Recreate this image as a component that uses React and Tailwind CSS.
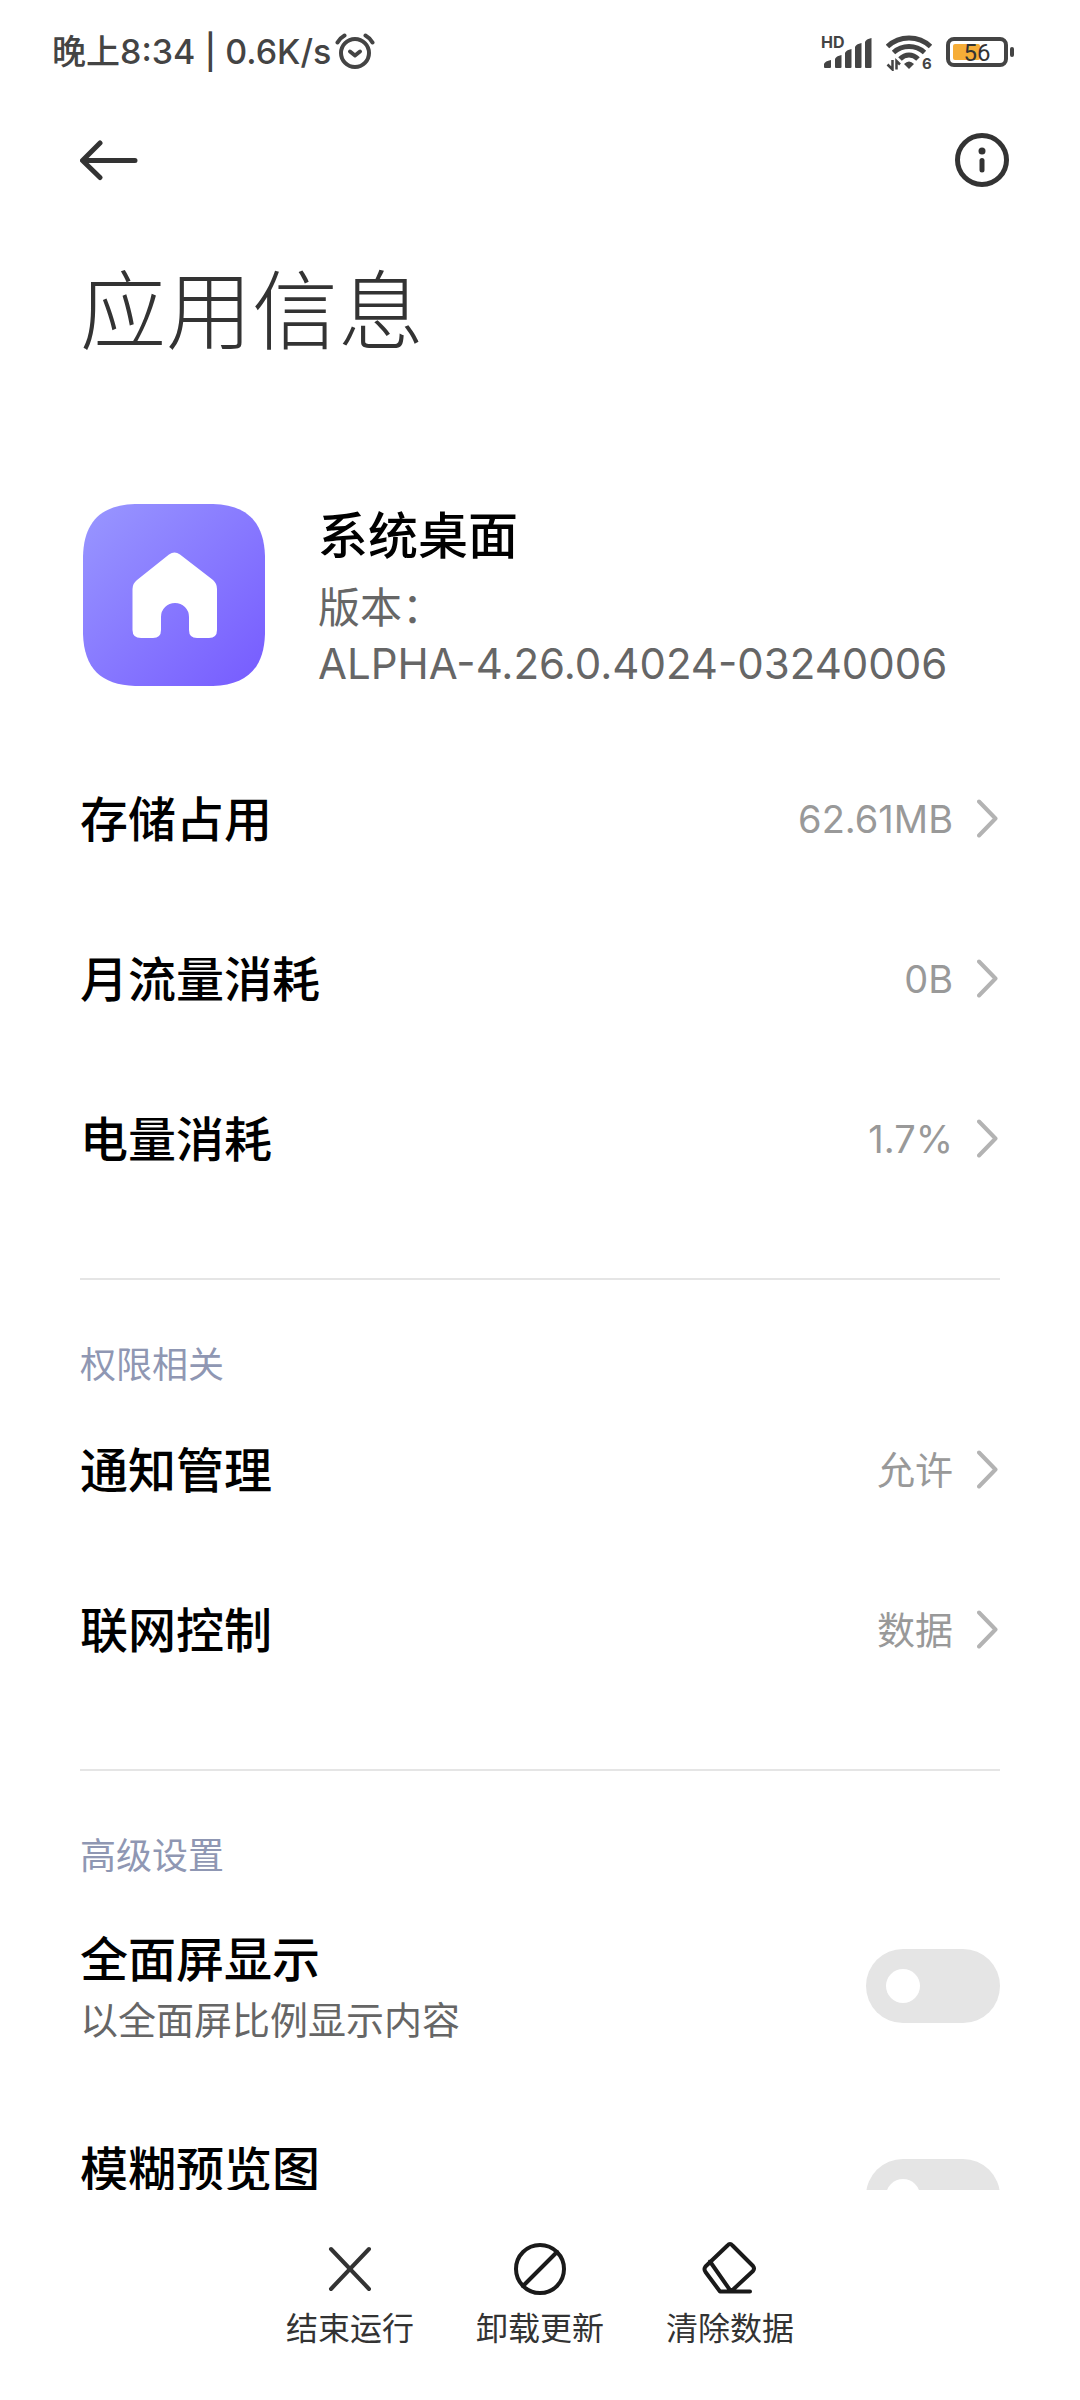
const usageRows = [
  { label: "存储占用", value: "62.61MB" },
  { label: "月流量消耗", value: "0B" },
  { label: "电量消耗", value: "1.7%" },
];

const permissionRows = [
  { label: "通知管理", value: "允许" },
  { label: "联网控制", value: "数据" },
];

const AlarmIcon = () => (
  <svg className="w-[40px] h-[38px]" viewBox="0 0 40 38" fill="none" stroke="#444" strokeLinecap="round">
    <circle cx="20" cy="20" r="14" strokeWidth="4" />
    <path d="M15 18.500l5 4 5-4" strokeWidth="4" strokeLinejoin="round" />
    <path d="M2.500 9.500Q5 5 9.500 2.500M30.500 2.500Q35 5 37.500 9.500" strokeWidth="4" />
  </svg>
);

const SignalIcon = () => (
  <svg className="w-[53px] h-[36px]" viewBox="0 0 53 36" fill="#444" role="img" aria-label="HD">
    <text x="0" y="14" fontSize="16" fontWeight="700">HD</text>
    <path d="M3 33V30Q4 27 10 26V33Q10 34 9 34H4Q3 34 3 33ZM14 33V25Q15 22 20.500 21V33Q20.500 34 19.500 34H15Q14 34 14 33ZM24 33V19Q25 16 30.500 15V33Q30.500 34 29.500 34H25Q24 34 24 33ZM34 33V13Q35 10 40.500 9V33Q40.500 34 39.500 34H35Q34 34 34 33ZM44 33V8Q45 5 50.500 4V33Q50.500 34 49.500 34H45Q44 34 44 33Z" />
  </svg>
);

const WifiIcon = () => (
  <svg className="w-[48px] h-[38px]" viewBox="0 0 48 38" fill="none" stroke="#444" strokeWidth="5">
    <path d="M1.500 13.500Q10.500 5 23 5T44.500 13.500" />
    <path d="M7.500 19.500Q14 13.500 23 13.500T38.500 19.500" />
    <path d="M14 26Q18 22 23 22T32 26" />
    <path d="M18 31Q23 26 28 31L23 36Z" fill="#444" stroke="none" />
    <path d="M6.500 27V36.500L1.500 31.500M10.500 36.500V28L14 31.500" strokeWidth="2.500" />
    <text x="36" y="36" fontSize="15" fontWeight="700" fill="#444" stroke="none">6</text>
  </svg>
);

const BatteryIcon = () => (
  <svg className="w-[69px] h-[30px]" viewBox="0 0 69 30" role="img" aria-label="56%">
    <rect x="2" y="2" width="58" height="26" rx="6" fill="none" stroke="#444" strokeWidth="4" />
    <rect x="64" y="10" width="4" height="10" rx="2" fill="#444" />
    <rect x="7" y="7" width="27" height="16" rx="2" fill="#f6ad37" />
    <text x="31" y="24" fontSize="24" textAnchor="middle" fill="#333" className="font-['Roboto',sans-serif]">56</text>
  </svg>
);

const StatusBar = () => (
  <div className="flex items-center justify-between h-[104px] pl-[52px] pr-[65px] shrink-0">
    <div className="flex items-center gap-1 text-[#444]">
      <span className="text-[34px] leading-[44px] font-medium">晚上8:34 | 0.6K/s</span>
      <AlarmIcon />
    </div>
    <div className="flex items-center gap-3">
      <SignalIcon />
      <WifiIcon />
      <BatteryIcon />
    </div>
  </div>
);

const Header = () => (
  <header className="flex items-center justify-between h-[112px] pl-20 pr-[71px]">
    <button type="button" aria-label="返回">
      <svg className="w-[58px] h-[54px]" viewBox="0 0 58 54" fill="none" stroke="#333" strokeWidth="5" strokeLinecap="round" strokeLinejoin="round">
        <path d="M20 10L2.500 27.500L20 44.500M3 27.500H55" />
      </svg>
    </button>
    <button type="button" aria-label="信息">
      <svg className="w-[54px] h-[54px]" viewBox="0 0 54 54" fill="none" stroke="#333" strokeWidth="5">
        <circle cx="27" cy="27" r="24.500" />
        <circle cx="27" cy="18" r="3.500" fill="#333" stroke="none" />
        <path d="M27 27.500V37" strokeLinecap="round" />
      </svg>
    </button>
  </header>
);

const AppIcon = () => (
  <svg className="w-[182px] h-[182px] shrink-0" viewBox="0 0 182 182">
    <defs>
      <linearGradient id="launcher" x1="0" y1="0" x2="1" y2="1">
        <stop offset="0" stopColor="#9997ff" />
        <stop offset="1" stopColor="#765bff" />
      </linearGradient>
    </defs>
    <path d="M52 0H130C164 1 181 18 182 52V130C181 164 164 181 130 182H52C18 181 1 164 0 130V52C1 18 18 1 52 0Z" fill="url(#launcher)" />
    <path
      d="M86 50.500Q91.500 46.500 97 50.500L130 76Q134 79.500 134 85V126Q134 134 126 134H114Q106 134 106 126V113A14 14 0 0 0 78 113V126Q78 134 70 134H58Q49.500 134 49.500 126V85Q49.500 79.500 54 76Z"
      fill="#fff"
    />
  </svg>
);

const LinkRow = ({ label, value }) => (
  <li>
    <button type="button" className="flex items-center w-full h-40 text-left">
      <span className="flex-1 pt-[2px] text-[48px] leading-[64px] font-medium text-black">{label}</span>
      <span className="text-[38px] leading-[56px] text-[#999]">{value}</span>
      <svg className="w-[22px] h-[40px] ml-[24px] mr-[1px]" viewBox="0 0 22 40" fill="none" stroke="#b3b3b3" strokeWidth="4" strokeLinecap="round" strokeLinejoin="round">
        <path d="M2 2.500L18.500 19.500L2 36.500" />
      </svg>
    </button>
  </li>
);

const SwitchRow = ({ id, label, note }) => (
  <div className="flex items-center justify-between h-[210px] shrink-0">
    <label htmlFor={id} className="flex flex-col pt-1">
      <span className="text-[48px] leading-[64px] font-medium text-black">{label}</span>
      <span className="min-h-[56px] text-[38px] leading-[56px] text-[#666]">{note}</span>
    </label>
    <input
      id={id}
      type="checkbox"
      role="switch"
      className="appearance-none w-[134px] h-[74px] p-5 rounded-full bg-[#e5e5e5] before:block before:w-[34px] before:h-[34px] before:rounded-full before:bg-white checked:bg-[#3482ff] checked:before:ml-auto"
    />
  </div>
);

const Section = ({ title, children }) => (
  <section className="mt-[59px] border-t-2 border-[#e5e5e5] pt-[60px]">
    <h2 className="text-[36px] leading-[50px] text-[#8f97b3]">{title}</h2>
    {children}
  </section>
);

const Action = ({ label, children }) => (
  <button type="button" className="flex flex-col items-center">
    <svg className="w-[60px] h-[60px]" viewBox="0 0 60 60" fill="none" stroke="#1a1a1a" strokeWidth="4" strokeLinecap="round" strokeLinejoin="round">
      {children}
    </svg>
    <span className="mt-2 text-[32px] leading-[44px] text-[#333]">{label}</span>
  </button>
);

const App = () => {
  return (
    <div className="flex flex-col h-screen bg-white font-['Inter','Noto_Sans_CJK_SC',sans-serif]">
      <StatusBar />
      <Header />
      <main className="flex-1 min-h-0 overflow-hidden px-20">
        <h1 className="mt-[48px] text-[86px] leading-[96px] font-light text-[#333]">应用信息</h1>

        <div className="flex items-start mt-[144px] mb-[47px] pl-[3px]">
          <AppIcon />
          <div className="ml-[53px]">
            <p className="text-[50px] leading-[64px] font-medium text-black">系统桌面</p>
            <p className="mt-3 text-[42px] leading-[56px] text-[#666]">
              版本：
              <br />
              ALPHA-4.26.0.4024-03240006
            </p>
          </div>
        </div>

        <ul>
          {usageRows.map((row) => (
            <LinkRow key={row.label} label={row.label} value={row.value} />
          ))}
        </ul>

        <Section title="权限相关">
          <ul>
            {permissionRows.map((row) => (
              <LinkRow key={row.label} label={row.label} value={row.value} />
            ))}
          </ul>
        </Section>

        <Section title="高级设置">
          <SwitchRow id="fullscreen" label="全面屏显示" note="以全面屏比例显示内容" />
          <SwitchRow id="blur-preview" label="模糊预览图" />
        </Section>
      </main>

      <footer className="flex justify-center gap-[62px] pt-[49px] pb-[49px] bg-white">
        <Action label="结束运行">
          <path d="M11 10L49 50M49 10L11 50" stroke="#333" />
        </Action>
        <Action label="卸载更新">
          <circle cx="30" cy="30" r="24" />
          <path d="M47 13L13 47" />
        </Action>
        <Action label="清除数据">
          <path d="M27.500 6.500Q30 3.500 32.500 6.500L53 27Q55 29.500 53 32L31 52.500H20L5.500 33Q3.500 30 5.500 27.500ZM10 22.500L31 52.500H50" />
        </Action>
      </footer>
    </div>
  );
};

export default App;
